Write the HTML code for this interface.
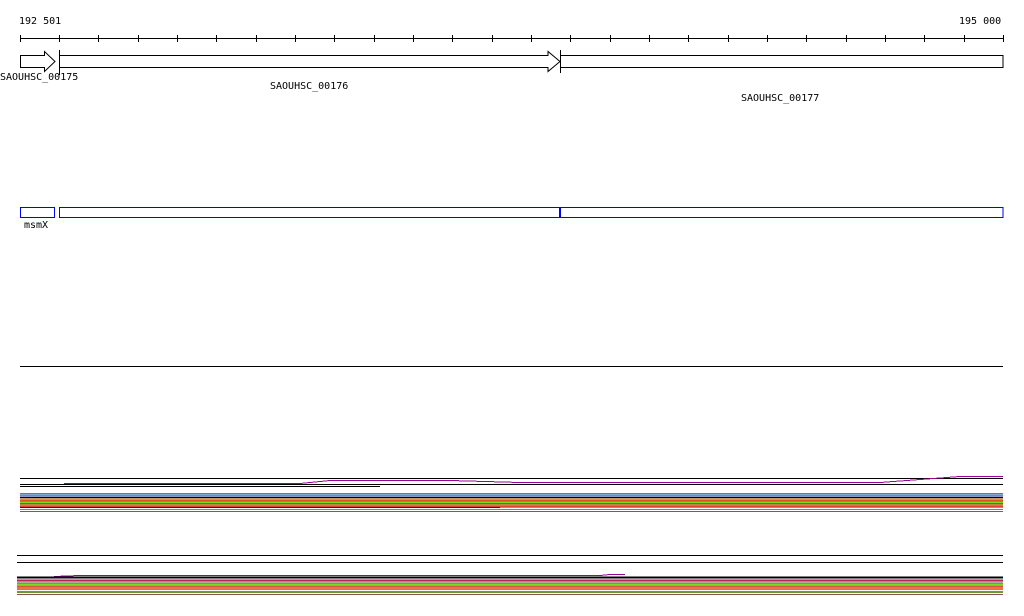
<!DOCTYPE html>
<html><head><meta charset="utf-8"><style>
body{margin:0;background:#fff;width:1024px;height:611px;overflow:hidden}
text{font-family:"DejaVu Sans Mono","Liberation Mono",monospace;font-size:10px;fill:#000}
</style></head><body>
<svg width="1024" height="611" viewBox="0 0 1024 611" xmlns="http://www.w3.org/2000/svg" shape-rendering="crispEdges">
<text x="19" y="24">192 501</text>
<text x="959" y="24">195 000</text>
<line x1="20" y1="38.5" x2="1003" y2="38.5" stroke="#000"/>
<g stroke="#000">
<line x1="20.5" y1="35" x2="20.5" y2="42"/><line x1="59.5" y1="35" x2="59.5" y2="42"/><line x1="98.5" y1="35" x2="98.5" y2="42"/><line x1="138.5" y1="35" x2="138.5" y2="42"/><line x1="177.5" y1="35" x2="177.5" y2="42"/><line x1="216.5" y1="35" x2="216.5" y2="42"/><line x1="256.5" y1="35" x2="256.5" y2="42"/><line x1="295.5" y1="35" x2="295.5" y2="42"/><line x1="334.5" y1="35" x2="334.5" y2="42"/><line x1="374.5" y1="35" x2="374.5" y2="42"/><line x1="413.5" y1="35" x2="413.5" y2="42"/><line x1="452.5" y1="35" x2="452.5" y2="42"/><line x1="492.5" y1="35" x2="492.5" y2="42"/><line x1="531.5" y1="35" x2="531.5" y2="42"/><line x1="570.5" y1="35" x2="570.5" y2="42"/><line x1="610.5" y1="35" x2="610.5" y2="42"/><line x1="649.5" y1="35" x2="649.5" y2="42"/><line x1="688.5" y1="35" x2="688.5" y2="42"/><line x1="728.5" y1="35" x2="728.5" y2="42"/><line x1="767.5" y1="35" x2="767.5" y2="42"/><line x1="806.5" y1="35" x2="806.5" y2="42"/><line x1="846.5" y1="35" x2="846.5" y2="42"/><line x1="885.5" y1="35" x2="885.5" y2="42"/><line x1="924.5" y1="35" x2="924.5" y2="42"/><line x1="964.5" y1="35" x2="964.5" y2="42"/><line x1="1003.5" y1="35" x2="1003.5" y2="42"/>
</g>
<g fill="none" stroke="#000" shape-rendering="auto">
<path d="M20.5 55.5H44.5V51.5L55 61.5L44.5 71.5V67.5H20.5Z" stroke-width="1"/>
<path d="M59.5 55.5H548V51.5L560 61.5L548 71.5V67.5H59.5Z"/>
<line x1="59.5" y1="50" x2="59.5" y2="75"/>
<line x1="560.5" y1="50" x2="560.5" y2="73"/>
<rect x="560.5" y="55.5" width="442.5" height="12"/>
</g>
<text x="0" y="80">SAOUHSC_00175</text>
<text x="270" y="89">SAOUHSC_00176</text>
<text x="741" y="101">SAOUHSC_00177</text>
<g fill="none" stroke="#00f">
<rect x="20.5" y="207.5" width="34" height="10"/>
<rect x="59.5" y="207.5" width="943.5" height="10"/>
</g>
<rect x="559" y="207" width="2" height="11" fill="#00f"/>
<text x="24" y="228">msmX</text>
<line x1="20" y1="366.5" x2="1003" y2="366.5" stroke="#000"/>
<!-- band 1 -->
<g stroke-width="1">
<line x1="20" y1="478.5" x2="1003" y2="478.5" stroke="#000"/>
<path d="M64 483.5H300L330 480.5H450L520 482.5H880L960 476.5H1003" stroke="#909" fill="none"/>
<line x1="20" y1="484.5" x2="1003" y2="484.5" stroke="#000"/>
<line x1="20" y1="486.5" x2="380" y2="486.5" stroke="#000"/>
<line x1="20" y1="493.5" x2="1003" y2="493.5" stroke="#c4a"/>
<line x1="20" y1="494.5" x2="1003" y2="494.5" stroke="#7ac"/>
<line x1="20" y1="495.5" x2="1003" y2="495.5" stroke="#e63"/>
<line x1="20" y1="496.5" x2="1003" y2="496.5" stroke="#89c"/>
<line x1="20" y1="497.5" x2="1003" y2="497.5" stroke="#000"/>
<line x1="20" y1="498.5" x2="1003" y2="498.5" stroke="#c96"/>
<line x1="20" y1="499.5" x2="1003" y2="499.5" stroke="#a99"/>
<line x1="20" y1="500.5" x2="1003" y2="500.5" stroke="#d52"/>
<line x1="20" y1="501.5" x2="1003" y2="501.5" stroke="#a83"/>
<line x1="20" y1="502.5" x2="1003" y2="502.5" stroke="#7d2"/>
<line x1="20" y1="503.5" x2="1003" y2="503.5" stroke="#c35"/>
<line x1="20" y1="504.5" x2="1003" y2="504.5" stroke="#b84"/>
<line x1="20" y1="505.5" x2="1003" y2="505.5" stroke="#993"/>
<line x1="20" y1="506.5" x2="1003" y2="506.5" stroke="#d43"/>
<line x1="20" y1="507.5" x2="500" y2="507.5" stroke="#222"/>
<line x1="500" y1="507.5" x2="1003" y2="507.5" stroke="#e74"/>
<line x1="20" y1="509.5" x2="1003" y2="509.5" stroke="#884"/>
<line x1="20" y1="511.5" x2="600" y2="511.5" stroke="#855"/>
<line x1="600" y1="511.5" x2="1003" y2="511.5" stroke="#855"/>
</g>
<!-- band 2 -->
<line x1="17" y1="555.5" x2="1003" y2="555.5" stroke="#000"/>
<line x1="17" y1="562.5" x2="1003" y2="562.5" stroke="#000"/>
<g>
<path d="M54 576.5L80 575.5H600L610 574.5H625" stroke="#909" fill="none"/>
<line x1="17" y1="577.5" x2="1003" y2="577.5" stroke="#000" stroke-width="2"/>
<line x1="17" y1="579.5" x2="1003" y2="579.5" stroke="#8ae"/>
<line x1="17" y1="580.5" x2="1003" y2="580.5" stroke="#b25"/>
<line x1="17" y1="581.5" x2="1003" y2="581.5" stroke="#c85"/>
<line x1="17" y1="582.5" x2="1003" y2="582.5" stroke="#aa9"/>
<line x1="17" y1="583.5" x2="1003" y2="583.5" stroke="#e63"/>
<line x1="17" y1="584.5" x2="1003" y2="584.5" stroke="#7d2"/>
<line x1="17" y1="585.5" x2="1003" y2="585.5" stroke="#c93"/>
<line x1="17" y1="586.5" x2="1003" y2="586.5" stroke="#d54"/>
<line x1="17" y1="587.5" x2="1003" y2="587.5" stroke="#993"/>
<line x1="17" y1="588.5" x2="1003" y2="588.5" stroke="#e74"/>
<line x1="17" y1="589.5" x2="1003" y2="589.5" stroke="#a84"/>
<line x1="17" y1="591.5" x2="1003" y2="591.5" stroke="#c64"/>
<line x1="17" y1="592.5" x2="1003" y2="592.5" stroke="#693"/>
<line x1="17" y1="594.5" x2="1003" y2="594.5" stroke="#855"/>
</g>
</svg>
</body></html>
